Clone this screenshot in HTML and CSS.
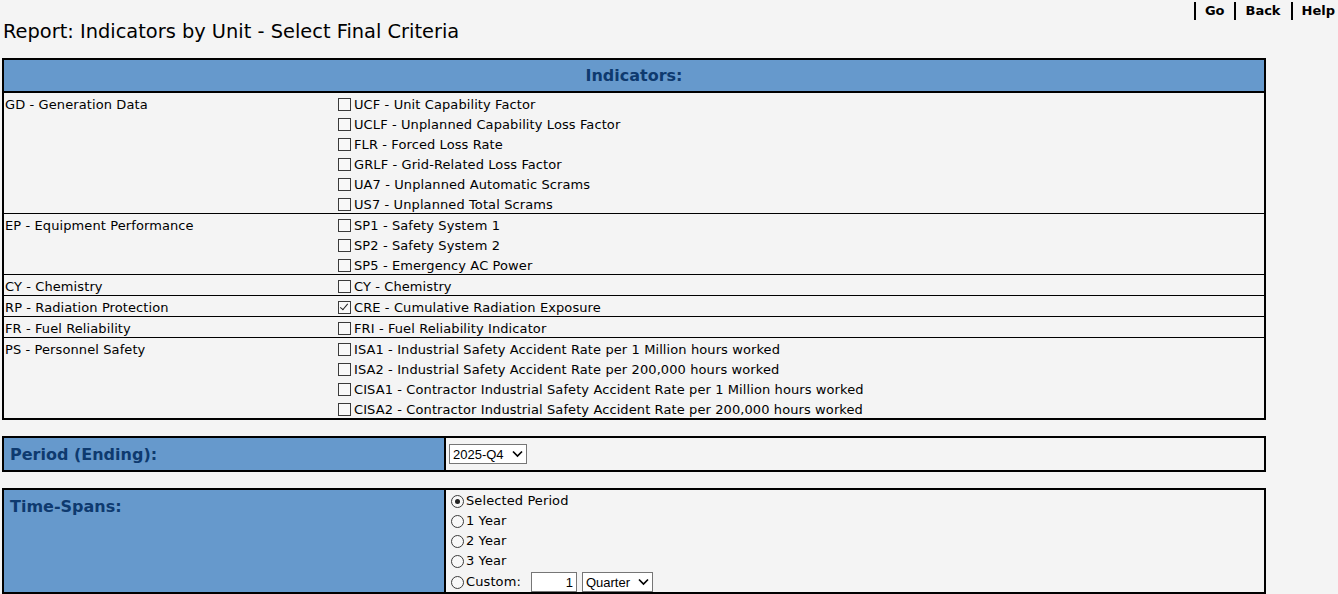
FILE: index.html
```html
<!DOCTYPE html>
<html>
<head>
<meta charset="utf-8">
<title>Report: Indicators by Unit - Select Final Criteria</title>
<link rel="stylesheet" href="styles.css">
</head>
<body>
<nav class="topnav">
  <a href="#">Go</a>
  <a href="#">Back</a>
  <a href="#">Help</a>
</nav>
<h1 class="title">Report: Indicators by Unit - Select Final Criteria</h1>

<table class="crit">
  <thead>
    <tr><th colspan="2" class="hdr">Indicators:</th></tr>
  </thead>
  <tbody>
    <tr>
      <td class="grp">GD - Generation Data</td>
      <td class="opts">
        <label class="opt"><input type="checkbox" class="cb">UCF - Unit Capability Factor</label>
        <label class="opt"><input type="checkbox" class="cb">UCLF - Unplanned Capability Loss Factor</label>
        <label class="opt"><input type="checkbox" class="cb">FLR - Forced Loss Rate</label>
        <label class="opt"><input type="checkbox" class="cb">GRLF - Grid-Related Loss Factor</label>
        <label class="opt"><input type="checkbox" class="cb">UA7 - Unplanned Automatic Scrams</label>
        <label class="opt"><input type="checkbox" class="cb">US7 - Unplanned Total Scrams</label>
      </td>
    </tr>
    <tr>
      <td class="grp">EP - Equipment Performance</td>
      <td class="opts">
        <label class="opt"><input type="checkbox" class="cb">SP1 - Safety System 1</label>
        <label class="opt"><input type="checkbox" class="cb">SP2 - Safety System 2</label>
        <label class="opt"><input type="checkbox" class="cb">SP5 - Emergency AC Power</label>
      </td>
    </tr>
    <tr>
      <td class="grp">CY - Chemistry</td>
      <td class="opts">
        <label class="opt"><input type="checkbox" class="cb">CY - Chemistry</label>
      </td>
    </tr>
    <tr>
      <td class="grp">RP - Radiation Protection</td>
      <td class="opts">
        <label class="opt"><input type="checkbox" class="cb" checked>CRE - Cumulative Radiation Exposure</label>
      </td>
    </tr>
    <tr>
      <td class="grp">FR - Fuel Reliability</td>
      <td class="opts">
        <label class="opt"><input type="checkbox" class="cb">FRI - Fuel Reliability Indicator</label>
      </td>
    </tr>
    <tr>
      <td class="grp">PS - Personnel Safety</td>
      <td class="opts">
        <label class="opt"><input type="checkbox" class="cb">ISA1 - Industrial Safety Accident Rate per 1 Million hours worked</label>
        <label class="opt"><input type="checkbox" class="cb">ISA2 - Industrial Safety Accident Rate per 200,000 hours worked</label>
        <label class="opt"><input type="checkbox" class="cb">CISA1 - Contractor Industrial Safety Accident Rate per 1 Million hours worked</label>
        <label class="opt"><input type="checkbox" class="cb">CISA2 - Contractor Industrial Safety Accident Rate per 200,000 hours worked</label>
      </td>
    </tr>
  </tbody>
</table>

<table class="side period">
  <tr>
    <th class="side-lbl mid">Period (Ending):</th>
    <td class="side-val">
      <span class="sel-wrap sel-period">
        <select class="sel"><option>2025-Q4</option></select>
        <svg class="chev" width="11" height="8" viewBox="0 0 11 8"><path d="M1 1.5 L5.5 6 L10 1.5" fill="none" stroke="#000" stroke-width="1.7"/></svg>
      </span>
    </td>
  </tr>
</table>

<table class="side spans">
  <tr>
    <th class="side-lbl top">Time-Spans:</th>
    <td class="side-val list">
      <label class="opt"><input type="radio" name="ts" class="rb" checked>Selected Period</label>
      <label class="opt"><input type="radio" name="ts" class="rb">1 Year</label>
      <label class="opt"><input type="radio" name="ts" class="rb">2 Year</label>
      <label class="opt"><input type="radio" name="ts" class="rb">3 Year</label>
      <div class="opt custom">
        <label class="opt-inline"><input type="radio" name="ts" class="rb">Custom:</label>
        <input type="text" class="num" value="1">
        <span class="sel-wrap sel-unit">
          <select class="sel"><option>Quarter</option></select>
          <svg class="chev" width="11" height="8" viewBox="0 0 11 8"><path d="M1 1.5 L5.5 6 L10 1.5" fill="none" stroke="#000" stroke-width="1.7"/></svg>
        </span>
      </div>
    </td>
  </tr>
</table>
</body>
</html>
```

FILE: styles.css
```css
html, body {
  margin: 0;
  padding: 0;
  background: #f4f4f4;
}
body {
  font-family: "DejaVu Sans", Verdana, sans-serif;
  font-size: 13px;
  letter-spacing: 0.1px;
  color: #000;
}

.topnav {
  display: flex;
  justify-content: flex-end;
  padding-top: 2px;
  height: 18px;
}
.topnav a {
  display: block;
  border-left: 2px solid #000;
  padding: 0 3px 0 9px;
  font-weight: bold;
  font-size: 13px;
  letter-spacing: 0;
  line-height: 18px;
  color: #000;
  text-decoration: none;
}
.topnav a + a { margin-left: 7px; }

.title {
  margin: 1px 0 0 3px;
  font-size: 19.4px;
  font-weight: normal;
  letter-spacing: 0;
  line-height: 22px;
  height: 37px;
}

.crit {
  margin-left: 2px;
  width: 1264px;
  border: 2px solid #000;
  border-spacing: 0;
  border-collapse: separate;
}
.hdr {
  background: #6699cc;
  color: #0e3a6f;
  font-size: 16px;
  font-weight: bold;
  letter-spacing: 0;
  height: 31px;
  padding: 0;
  text-align: center;
  vertical-align: middle;
  border-bottom: 2px solid #000;
}
.crit td {
  padding: 0;
  vertical-align: top;
  border-top: 1px solid #000;
}
.crit tbody tr:first-child td { border-top: 0; }
.grp {
  width: 332px;
  padding: 3px 0 0 1px !important;
  line-height: 17px;
}

.opt {
  display: flex;
  align-items: center;
  box-sizing: border-box;
  height: 20px;
  padding-top: 3px;
  line-height: 17px;
  white-space: nowrap;
}
.opt-inline {
  display: flex;
  align-items: center;
}

.cb {
  appearance: none;
  -webkit-appearance: none;
  width: 13px;
  height: 13px;
  margin: 0 3px 0 1px;
  border: 1px solid #3a3a3a;
  background: #f8f8f8;
  position: relative;
  flex: none;
}
.cb:checked::after {
  content: "";
  position: absolute;
  left: 3px;
  top: 0px;
  width: 3px;
  height: 7px;
  border-right: 1.5px solid #222;
  border-bottom: 1.5px solid #222;
  transform: rotate(40deg);
}

.rb {
  appearance: none;
  -webkit-appearance: none;
  width: 13px;
  height: 13px;
  margin: 0 2px 0 5px;
  border: 1px solid #3a3a3a;
  border-radius: 50%;
  background: #f8f8f8;
  position: relative;
  flex: none;
}
.rb:checked::after {
  content: "";
  position: absolute;
  left: 3px;
  top: 3px;
  width: 5px;
  height: 5px;
  border-radius: 50%;
  background: #222;
}

.side {
  margin-left: 2px;
  width: 1264px;
  border: 2px solid #000;
  border-spacing: 0;
}
.period { margin-top: 16px; }
.spans { margin-top: 16px; }

.side-lbl {
  width: 434px;
  background: #6699cc;
  color: #0e3a6f;
  font-size: 16px;
  font-weight: bold;
  letter-spacing: 0;
  text-align: left;
  padding: 0 0 0 6px;
  border-right: 2px solid #000;
}
.side-lbl.mid { vertical-align: middle; height: 31px; padding-top: 1px; }
.side-lbl.top { vertical-align: top; padding-top: 7px; }
.side-val {
  padding: 0 0 0 3px;
  vertical-align: middle;
}
.side-val.list {
  padding: 0;
  vertical-align: top;
}
.side-val.list .opt { padding-top: 2px; line-height: 18px; }

.sel-wrap {
  display: inline-block;
  position: relative;
  vertical-align: middle;
}
.sel {
  appearance: none;
  -webkit-appearance: none;
  height: 20px;
  border: 1px solid #767676;
  border-radius: 0;
  background: #fff;
  font-family: "Liberation Sans", Arial, sans-serif;
  font-size: 13px;
  color: #000;
  padding: 0 0 0 3px;
  margin: 0;
  display: block;
}
.sel-period .sel { width: 78px; }
.sel-unit .sel { width: 71px; }
.chev {
  position: absolute;
  right: 4px;
  top: 6px;
  pointer-events: none;
}

.side-val.list .custom { height: 22px; padding-top: 2px; }
.num {
  width: 46px;
  height: 20px;
  box-sizing: border-box;
  margin: 0 5px 0 10px;
  border: 1px solid #767676;
  background: #fff;
  font-family: "Liberation Sans", Arial, sans-serif;
  font-size: 13px;
  text-align: right;
  padding: 0 3px;
}
```
